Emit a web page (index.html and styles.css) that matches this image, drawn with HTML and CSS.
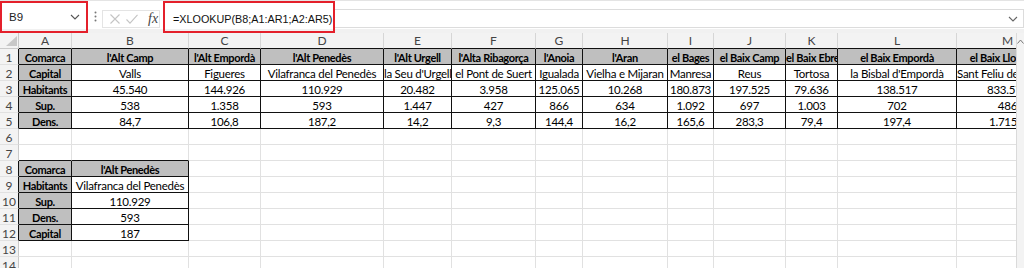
FILE: index.html
```html
<!DOCTYPE html>
<html lang="ca">
<head>
<meta charset="utf-8">
<title>Excel XLOOKUP</title>
<link rel="stylesheet" href="styles.css">
</head>
<body>
<div class="app">
  <div class="fbar">
    <div class="namebox">
      <span class="nbtext">B9</span>
      <svg class="chev" width="10" height="6" viewBox="0 0 10 6"><path d="M1 1 L5 5 L9 1" fill="none" stroke="#555" stroke-width="1.1"/></svg>
    </div>
    <div class="dots">
      <svg width="3" height="11" viewBox="0 0 3 11"><circle cx="1.5" cy="1.5" r="1" fill="#777"/><circle cx="1.5" cy="5.5" r="1" fill="#777"/><circle cx="1.5" cy="9.5" r="1" fill="#777"/></svg>
    </div>
    <div class="fxbtns">
      <svg width="10" height="10" viewBox="0 0 10 10"><path d="M0.5 0.5 L9.5 9.5 M9.5 0.5 L0.5 9.5" stroke="#c4c4c4" stroke-width="1.1" fill="none"/></svg>
      <svg width="12" height="10" viewBox="0 0 12 10"><path d="M0.5 5.5 L4 9.2 L11.5 0.8" stroke="#c4c4c4" stroke-width="1.1" fill="none"/></svg>
      <span class="fx">fx</span>
    </div>
    <div class="formula">
      <div class="ftext">=XLOOKUP(B8;A1:AR1;A2:AR5)</div>
      <div class="frest">
        <svg class="chev2" width="10" height="6" viewBox="0 0 10 6"><path d="M1 1 L5 5 L9 1" fill="none" stroke="#666" stroke-width="1.1"/></svg>
      </div>
    </div>
  </div>
  <div class="sheet">
    <div class="viewport">
      <div class="grid">
        <div class="c corner"><svg width="11" height="10" viewBox="0 0 11 10"><polygon points="11,0 11,10 0,10" fill="#c8c8c8"/></svg></div>
        <div class="c ch bb">A</div><div class="c ch bb">B</div><div class="c ch bb">C</div><div class="c ch bb">D</div><div class="c ch bb">E</div><div class="c ch bb">F</div><div class="c ch bb">G</div><div class="c ch bb">H</div><div class="c ch bb">I</div><div class="c ch bb">J</div><div class="c ch bb">K</div><div class="c ch bb">L</div><div class="c ch bb">M</div>

        <div class="c rh br">1</div>
        <div class="c t g">Comarca</div><div class="c t g">l'Alt Camp</div><div class="c t g">l'Alt Empordà</div><div class="c t g">l'Alt Penedès</div><div class="c t g">l'Alt Urgell</div><div class="c t g">l'Alta Ribagorça</div><div class="c t g">l'Anoia</div><div class="c t g">l'Aran</div><div class="c t g">el Bages</div><div class="c t g">el Baix Camp</div><div class="c t g">el Baix Ebre</div><div class="c t g">el Baix Empordà</div><div class="c t g">el Baix Llobregat</div>

        <div class="c rh br">2</div>
        <div class="c t g">Capital</div><div class="c t">Valls</div><div class="c t">Figueres</div><div class="c t">Vilafranca del Penedès</div><div class="c t">la Seu d'Urgell</div><div class="c t">el Pont de Suert</div><div class="c t">Igualada</div><div class="c t">Vielha e Mijaran</div><div class="c t">Manresa</div><div class="c t">Reus</div><div class="c t">Tortosa</div><div class="c t">la Bisbal d'Empordà</div><div class="c t">Sant Feliu de Llobregat</div>

        <div class="c rh br">3</div>
        <div class="c t g">Habitants</div><div class="c t">45.540</div><div class="c t">144.926</div><div class="c t">110.929</div><div class="c t">20.482</div><div class="c t">3.958</div><div class="c t">125.065</div><div class="c t">10.268</div><div class="c t">180.873</div><div class="c t">197.525</div><div class="c t">79.636</div><div class="c t">138.517</div><div class="c t">833.574</div>

        <div class="c rh br">4</div>
        <div class="c t g">Sup.</div><div class="c t">538</div><div class="c t">1.358</div><div class="c t">593</div><div class="c t">1.447</div><div class="c t">427</div><div class="c t">866</div><div class="c t">634</div><div class="c t">1.092</div><div class="c t">697</div><div class="c t">1.003</div><div class="c t">702</div><div class="c t">486</div>

        <div class="c rh br">5</div>
        <div class="c t g">Dens.</div><div class="c t">84,7</div><div class="c t">106,8</div><div class="c t">187,2</div><div class="c t">14,2</div><div class="c t">9,3</div><div class="c t">144,4</div><div class="c t">16,2</div><div class="c t">165,6</div><div class="c t">283,3</div><div class="c t">79,4</div><div class="c t">197,4</div><div class="c t">1.715,9</div>

        <div class="c rh">6</div>
        <div class="c"></div><div class="c"></div><div class="c"></div><div class="c"></div><div class="c"></div><div class="c"></div><div class="c"></div><div class="c"></div><div class="c"></div><div class="c"></div><div class="c"></div><div class="c"></div><div class="c"></div>

        <div class="c rh">7</div>
        <div class="c bb"></div><div class="c bb"></div><div class="c"></div><div class="c"></div><div class="c"></div><div class="c"></div><div class="c"></div><div class="c"></div><div class="c"></div><div class="c"></div><div class="c"></div><div class="c"></div><div class="c"></div>

        <div class="c rh br">8</div>
        <div class="c t g">Comarca</div><div class="c t g">l'Alt Penedès</div><div class="c"></div><div class="c"></div><div class="c"></div><div class="c"></div><div class="c"></div><div class="c"></div><div class="c"></div><div class="c"></div><div class="c"></div><div class="c"></div><div class="c"></div>

        <div class="c rh br">9</div>
        <div class="c t g">Habitants</div><div class="c t">Vilafranca del Penedès</div><div class="c"></div><div class="c"></div><div class="c"></div><div class="c"></div><div class="c"></div><div class="c"></div><div class="c"></div><div class="c"></div><div class="c"></div><div class="c"></div><div class="c"></div>

        <div class="c rh br">10</div>
        <div class="c t g">Sup.</div><div class="c t">110.929</div><div class="c"></div><div class="c"></div><div class="c"></div><div class="c"></div><div class="c"></div><div class="c"></div><div class="c"></div><div class="c"></div><div class="c"></div><div class="c"></div><div class="c"></div>

        <div class="c rh br">11</div>
        <div class="c t g">Dens.</div><div class="c t">593</div><div class="c"></div><div class="c"></div><div class="c"></div><div class="c"></div><div class="c"></div><div class="c"></div><div class="c"></div><div class="c"></div><div class="c"></div><div class="c"></div><div class="c"></div>

        <div class="c rh br">12</div>
        <div class="c t g">Capital</div><div class="c t">187</div><div class="c"></div><div class="c"></div><div class="c"></div><div class="c"></div><div class="c"></div><div class="c"></div><div class="c"></div><div class="c"></div><div class="c"></div><div class="c"></div><div class="c"></div>

        <div class="c rh">13</div>
        <div class="c"></div><div class="c"></div><div class="c"></div><div class="c"></div><div class="c"></div><div class="c"></div><div class="c"></div><div class="c"></div><div class="c"></div><div class="c"></div><div class="c"></div><div class="c"></div><div class="c"></div>

        <div class="c rh">14</div>
        <div class="c"></div><div class="c"></div><div class="c"></div><div class="c"></div><div class="c"></div><div class="c"></div><div class="c"></div><div class="c"></div><div class="c"></div><div class="c"></div><div class="c"></div><div class="c"></div><div class="c"></div>
      </div>
    </div>
    <div class="vscroll">
      <svg width="7" height="5" viewBox="0 0 7 5"><path d="M0.5 4.5 L3.5 1 L6.5 4.5" fill="none" stroke="#777" stroke-width="1"/></svg>
    </div>
  </div>
</div>
</body>
</html>
```

FILE: styles.css
```css
* { box-sizing: border-box; }

html, body {
  margin: 0;
  padding: 0;
  background: #ffffff;
}

body {
  width: 1024px;
  height: 268px;
  overflow: hidden;
  font-family: "Lato", "Liberation Sans", sans-serif;
  color: #000;
}

.fbar {
  display: flex;
  height: 33px;
  padding-top: 1px;
  border-top: 1px solid #e4e4e4;
  background: linear-gradient(#ffffff 28px, #f1f1f1 28px);
}

.namebox {
  width: 88px;
  height: 32px;
  margin-top: -1px;
  border: 2px solid #e4202b;
  display: flex;
  align-items: center;
  justify-content: space-between;
  padding: 0 6px 0 7px;
}

.nbtext {
  font-family: "Liberation Sans", sans-serif;
  font-size: 11.5px;
  color: #222;
}

.dots {
  width: 14px;
  display: flex;
  align-items: center;
  justify-content: center;
  padding-bottom: 2px;
}

.fxbtns {
  width: 58px;
  height: 18px;
  margin-top: 8px;
  border: 1px solid #e4e4e4;
  background: #fff;
  display: flex;
  align-items: center;
  padding-left: 7px;
}

.fxbtns svg + svg {
  margin-left: 6px;
}

.fx {
  font-family: "Liberation Serif", serif;
  font-style: italic;
  font-size: 14px;
  color: #444;
  margin-left: 10px;
  line-height: 14px;
}

.formula {
  flex: 1;
  display: flex;
  margin-left: 3px;
}

.ftext {
  width: 172px;
  height: 32px;
  margin-top: -1px;
  border: 2px solid #e4202b;
  font-family: "Liberation Sans", sans-serif;
  font-size: 10.8px;
  line-height: 12px;
  color: #111;
  padding: 10px 0 0 8px;
  white-space: nowrap;
}

.frest {
  flex: 1;
  height: 19px;
  margin-top: 7px;
  border-top: 1px solid #dcdcdc;
  border-bottom: 1px solid #dcdcdc;
  border-right: 1px solid #dcdcdc;
  background: #fff;
  display: flex;
  align-items: center;
  justify-content: flex-end;
  padding-right: 5px;
}

.sheet {
  display: flex;
  height: 235px;
}

.viewport {
  width: 1016px;
  overflow: hidden;
}

.grid {
  display: grid;
  grid-template-columns: 19px 53px 117px 72px 123px 68px 84px 47px 85px 46px 72px 52px 119px 102px;
  grid-template-rows: 16px repeat(14, 16px);
  width: 1059px;
}

.c {
  border-right: 1px solid #e1e1e1;
  border-bottom: 1px solid #e1e1e1;
  font-size: 11.5px;
  letter-spacing: -0.25px;
  line-height: 16px;
  padding-top: 1px;
  text-align: center;
  white-space: nowrap;
  overflow: hidden;
}

.corner {
  background: #f3f3f3;
  border-right: 1px solid #c9c9c9;
  border-bottom: 1px solid #c9c9c9;
  display: flex;
  align-items: flex-end;
  justify-content: flex-end;
  padding: 0 1px 2px 0;
}

.ch {
  background: #f3f3f3;
  color: #444;
  border-right: 1px solid #d6d6d6;
  border-bottom: 1px solid #c9c9c9;
  font-size: 12px;
  letter-spacing: 0;
  padding-top: 0;
}

.rh {
  background: #f3f3f3;
  color: #444;
  border-right: 1px solid #c9c9c9;
  border-bottom: 1px solid #e1e1e1;
  font-size: 12px;
  letter-spacing: 0;
}

.t {
  border-right: 1px solid #111;
  border-bottom: 1px solid #111;
}

.g {
  background: #bfbfbf;
  font-weight: bold;
  font-size: 11px;
  letter-spacing: -0.35px;
}

.bb { border-bottom: 1px solid #111; }
.br { border-right: 1px solid #111; }

.vscroll {
  width: 8px;
  background: #f3f3f3;
  border-left: 1px solid #dadada;
  display: flex;
  justify-content: center;
  padding-top: 6px;
}
```
